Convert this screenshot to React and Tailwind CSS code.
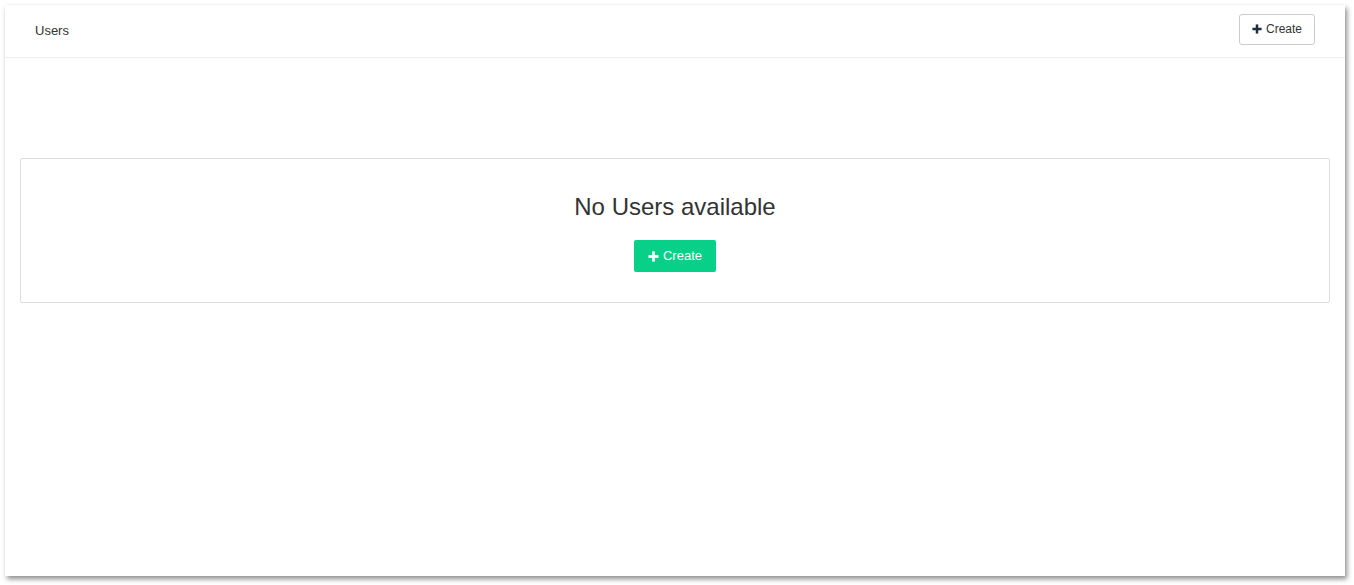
export default function App() {
  const PlusIcon = ({ className }) => (
    <svg viewBox="0 0 12 12" className={className} fill="currentColor">
      <rect x="4.5" y="0.5" width="3" height="11" />
      <rect x="0.5" y="4.5" width="11" height="3" />
    </svg>
  )

  return (
    <div className="h-[585px] w-[1354px] bg-white pl-[5px] pt-[5px] font-['Liberation_Sans',Arial,sans-serif] text-[#333]">
      {/* Window panel */}
      <div className="flex h-[571px] w-[1340px] flex-col bg-white shadow-[2px_3px_5px_rgba(0,0,0,0.45)]">
        {/* Header */}
        <div className="flex h-[53px] items-start justify-between border-b border-[#eee] pl-[30px] pr-[30px]">
          <span className="mt-[18px] text-[13px] leading-[15px] text-[#333]">Users</span>
          <button className="mt-[9px] flex h-[31px] w-[76px] items-center justify-center gap-[4px] rounded-[3px] border border-[#ccc] bg-white pb-[2px] text-[12px] text-[#333]">
            <PlusIcon className="h-[10px] w-[10px] text-[#1f2d3d]" />
            Create
          </button>
        </div>

        {/* Empty state card */}
        <div className="mx-[15px] mt-[100px] flex flex-col items-center rounded-[2px] border border-[#ddd] pb-[30px] pt-[35px]">
          <h2 className="text-[24px] leading-[26px] text-[#333]">No Users available</h2>
          <button className="mt-[20px] flex h-[32px] w-[82px] items-center justify-center gap-[4px] rounded-[2px] bg-[#09d089] text-[13px] text-white">
            <PlusIcon className="h-[11px] w-[11px]" />
            Create
          </button>
        </div>
      </div>
    </div>
  )
}
